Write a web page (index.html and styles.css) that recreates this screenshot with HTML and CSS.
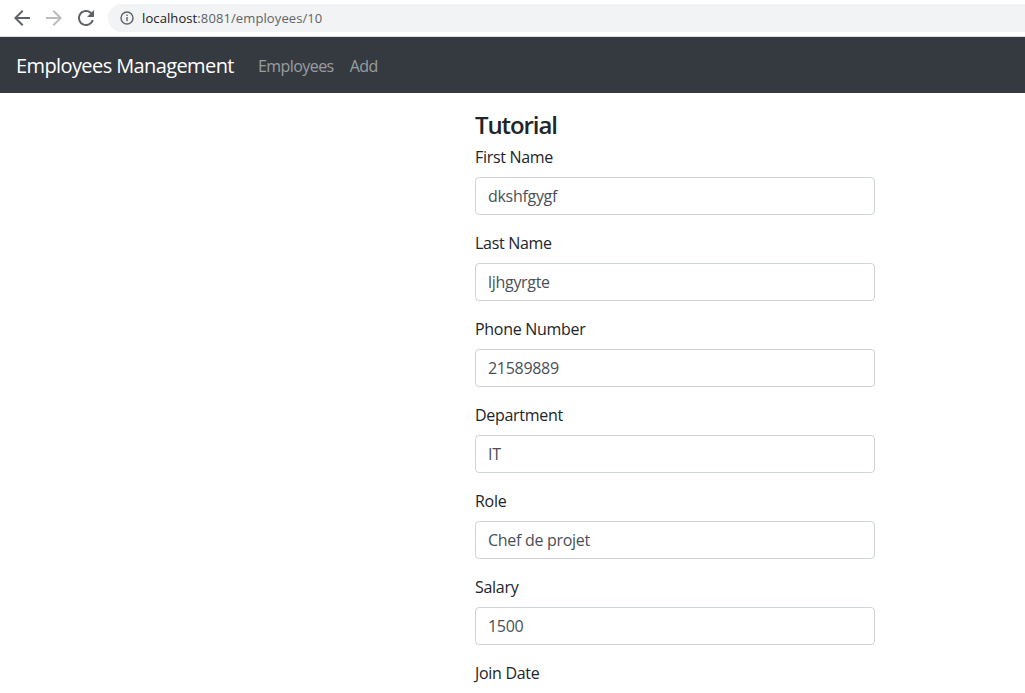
FILE: index.html
```html
<!DOCTYPE html>
<html lang="en">
<head>
<meta charset="utf-8">
<title>Employees Management</title>
<link rel="stylesheet" href="styles.css">
</head>
<body>
<div class="chrome">
  <div class="nav-buttons">
    <span class="nav-btn">
      <svg width="16" height="16" viewBox="0 0 16 16"><path d="M16 7H3.83l5.59-5.59L8 0 0 8l8 8 1.41-1.41L3.830 9H16z" fill="#5f6368"/></svg>
    </span>
    <span class="nav-btn">
      <svg width="16" height="16" viewBox="0 0 16 16"><path d="M0 7h12.17L6.58 1.41 8 0l8 8-8 8-1.41-1.41L12.17 9H0z" fill="#babcbe"/></svg>
    </span>
    <span class="nav-btn">
      <svg width="16" height="16" viewBox="0 0 16 16"><path d="M13.65 2.35A7.96 7.96 0 0 0 8 0C3.58 0 0 3.58 0 8s3.58 8 8 8c3.73 0 6.84-2.55 7.73-6h-2.08A5.99 5.99 0 0 1 8 14c-3.31 0-6-2.69-6-6s2.69-6 6-6c1.66 0 3.14.69 4.22 1.78L9 7h7V0l-2.35 2.35z" fill="#5f6368"/></svg>
    </span>
  </div>
  <div class="omnibox">
    <svg class="info" width="14" height="14" viewBox="0 0 14 14"><circle cx="7" cy="7" r="6" fill="none" stroke="#5f6368" stroke-width="1.4"/><rect x="6.3" y="6" width="1.4" height="4.2" fill="#5f6368"/><rect x="6.3" y="3.6" width="1.4" height="1.4" fill="#5f6368"/></svg>
    <span class="url"><span class="host">localhost</span>:8081/employees/10</span>
  </div>
</div>

<nav class="navbar">
  <a class="brand" href="#">Employees Management</a>
  <ul class="nav-links">
    <li><a href="#">Employees</a></li>
    <li><a href="#">Add</a></li>
  </ul>
</nav>

<main class="page">
  <div class="edit-form">
    <h4 class="title">Tutorial</h4>
    <form>
      <div class="form-group">
        <label for="firstName">First Name</label>
        <input id="firstName" class="form-control" type="text" value="dkshfgygf">
      </div>
      <div class="form-group">
        <label for="lastName">Last Name</label>
        <input id="lastName" class="form-control" type="text" value="ljhgyrgte">
      </div>
      <div class="form-group">
        <label for="phone">Phone Number</label>
        <input id="phone" class="form-control" type="text" value="21589889">
      </div>
      <div class="form-group">
        <label for="department">Department</label>
        <input id="department" class="form-control" type="text" value="IT">
      </div>
      <div class="form-group">
        <label for="role">Role</label>
        <input id="role" class="form-control" type="text" value="Chef de projet">
      </div>
      <div class="form-group">
        <label for="salary">Salary</label>
        <input id="salary" class="form-control" type="text" value="1500">
      </div>
      <div class="form-group">
        <label for="joinDate">Join Date</label>
        <input id="joinDate" class="form-control" type="text" value="">
      </div>
    </form>
  </div>
</main>
</body>
</html>
```

FILE: styles.css
```css
* { box-sizing: border-box; }

html, body {
  margin: 0;
  padding: 0;
  background: #fff;
  font-family: "Open Sans", "Noto Sans", "Liberation Sans", sans-serif;
  color: #212529;
  overflow: hidden;
}

.chrome {
  height: 37px;
  display: flex;
  align-items: flex-start;
  background: #fff;
  border-bottom: 1px solid #dadce0;
}

.nav-buttons {
  display: flex;
  padding-left: 6px;
  padding-top: 2px;
}

.nav-btn {
  width: 32px;
  height: 32px;
  display: flex;
  align-items: center;
  justify-content: center;
}

.omnibox {
  margin-left: 6px;
  margin-top: 4px;
  height: 28px;
  flex: 1;
  background: #f1f3f4;
  border-radius: 14px 0 0 14px;
  display: flex;
  align-items: center;
  padding-left: 12px;
}

.info { flex: none; }

.url {
  margin-left: 8px;
  font-size: 13px;
  color: #5f6368;
  letter-spacing: 0.1px;
}

.host { color: #202124; }

.navbar {
  background: #343a40;
  height: 56px;
  display: flex;
  align-items: center;
  padding: 1px 16px 0;
}

.brand {
  font-size: 20px;
  color: #fff;
  text-decoration: none;
  margin-right: 16px;
  line-height: 30px;
  letter-spacing: -0.6px;
}

.nav-links {
  list-style: none;
  display: flex;
  margin: 0;
  padding: 0;
}

.nav-links a {
  display: block;
  padding: 8px 8px;
  font-size: 16px;
  color: rgba(255, 255, 255, 0.5);
  text-decoration: none;
  letter-spacing: -0.55px;
}

.page {
  padding-left: 475px;
  padding-top: 15px;
}

.edit-form {
  width: 400px;
}

.title {
  margin: 0 0 5px;
  padding-top: 3px;
  font-size: 24px;
  font-weight: 600;
  line-height: 28.8px;
  letter-spacing: -1.1px;
}

.form-group {
  margin-bottom: 16px;
}

label {
  display: block;
  font-size: 16px;
  line-height: 24px;
  margin-bottom: 8px;
  letter-spacing: -0.3px;
}

.form-control {
  display: block;
  width: 100%;
  height: 38px;
  padding: 6px 12px;
  font-family: inherit;
  font-size: 16px;
  line-height: 24px;
  color: #495057;
  background: #fff;
  border: 1px solid #ced4da;
  border-radius: 4px;
  letter-spacing: -0.3px;
}
```
